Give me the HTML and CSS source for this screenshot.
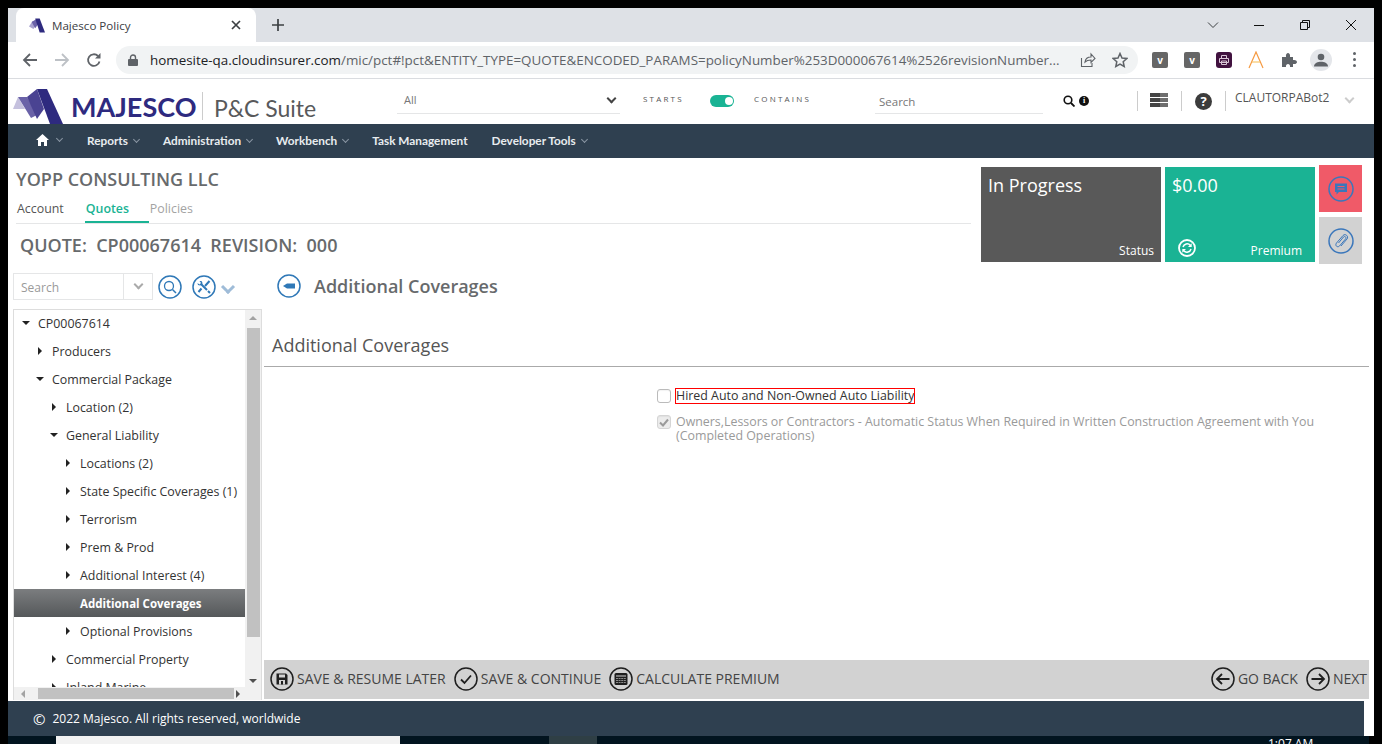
FILE: index.html
```html
<!DOCTYPE html>
<html lang="en">
<head>
    <meta charset="UTF-8">
    <title>Majesco Policy</title>
    <link rel="stylesheet" href="styles.css">
</head>
<body>
<div class="screen">

    <!-- browser chrome -->
    <div class="tabstrip">
        <div class="tab">
            <svg class="tab-logo" width="16" height="15" viewBox="0 0 18 16">
                <path d="M0 9 4 3 7 9 5 12Z" fill="#a9a3cf"/>
                <path d="M3 4 8 1 10 7 7 11Z" fill="#6a62a8"/>
                <path d="M7 0H12L18 16H12Z" fill="#2e2a7f"/>
            </svg>
            <span class="tab-title">Majesco Policy</span>
            <svg class="tab-close" width="10" height="10" viewBox="0 0 10 10"><path d="M1 1 9 9M9 1 1 9" stroke="#3c4043" stroke-width="1.7"/></svg>
        </div>
        <svg class="tab-new" width="14" height="14" viewBox="0 0 14 14"><path d="M7 1V13M1 7H13" stroke="#3c4043" stroke-width="1.7"/></svg>
        <div class="window-btns">
            <svg width="12" height="12" viewBox="0 0 12 12"><path d="M1 3.5 6 8.5 11 3.5" fill="none" stroke="#3c4043"/></svg>
            <svg width="12" height="12" viewBox="0 0 12 12"><path d="M1 6.5H11" stroke="#111"/></svg>
            <svg width="12" height="12" viewBox="0 0 12 12"><path d="M1.5 3.5H8.5V10.5H1.5ZM3.5 3.5V1.5H10.5V8.5H8.5" fill="none" stroke="#111"/></svg>
            <svg width="12" height="12" viewBox="0 0 12 12"><path d="M1 1 11 11M11 1 1 11" stroke="#111"/></svg>
        </div>
    </div>
    <div class="toolbar">
        <svg class="tb-nav" width="16" height="16" viewBox="0 0 16 16"><path d="M15 8H2M8 2 2 8 8 14" fill="none" stroke="#5f6368" stroke-width="1.8"/></svg>
        <svg class="tb-nav" width="16" height="16" viewBox="0 0 16 16"><path d="M1 8H14M8 2 14 8 8 14" fill="none" stroke="#bdc1c6" stroke-width="1.8"/></svg>
        <svg class="tb-nav" width="16" height="16" viewBox="0 0 16 16"><path d="M13.5 9.5A5.8 5.8 0 1 1 12 4" fill="none" stroke="#5f6368" stroke-width="1.8"/><path d="M14.5 1V6.5H9Z" fill="#5f6368"/></svg>
        <div class="omnibox">
            <svg width="10" height="12" viewBox="0 0 10 12"><path d="M2.5 5V3.5a2.5 2.5 0 0 1 5 0V5" fill="none" stroke="#5f6368" stroke-width="1.4"/><rect y="5" width="10" height="7" rx="1" fill="#5f6368"/></svg>
            <span class="url"><b>homesite-qa.cloudinsurer.com</b>/mic/pct#!pct&amp;ENTITY_TYPE=QUOTE&amp;ENCODED_PARAMS=policyNumber%253D000067614%2526revisionNumber...</span>
            <svg class="omni-share" width="16" height="16" viewBox="0 0 16 16"><path d="M1.5 6V14.5H12V11M5 10C5.500 6.500 8 5 11 5V2L15 6.500 11 10.500V8C8.500 8 6.500 8.500 5 10Z" fill="none" stroke="#5f6368" stroke-width="1.1"/></svg>
            <svg class="omni-star" width="16" height="16" viewBox="0 0 16 16"><path d="M8 1.500 10 6 14.800 6.500 11.200 9.700 12.200 14.500 8 12 3.800 14.500 4.800 9.700 1.200 6.500 6 6Z" fill="none" stroke="#5f6368" stroke-width="1.500"/></svg>
        </div>
        <div class="extensions">
            <span class="ext ext-v">v</span>
            <span class="ext ext-v">v</span>
            <span class="ext ext-print"><svg width="10" height="10" viewBox="0 0 10 10"><path d="M2.500 3.500V.5H7.500V3.500M.5 3.500H9.500V7.500H.5ZM2.500 6H7.500V9.500H2.500Z" fill="none" stroke="#d9c6d6"/></svg></span>
            <svg class="ext-a" width="16" height="18" viewBox="0 0 16 18"><path d="M1 17 8 1 15 17" fill="none" stroke="#f59a42" stroke-width="1.200"/><path d="M4 11H12" stroke="#f7c66b" stroke-width="1.200"/></svg>
            <svg class="ext-puzzle" width="16" height="16" viewBox="0 0 16 16"><path d="M1 5H5C4.500 2 6 1 7 1S9.500 2 9 5H12V8C15 7.500 16 9 16 10S15 12.500 12 12V15H9C9.500 13 8 12 7 12S4.500 13 5 15H1Z" fill="#5f6368"/></svg>
            <span class="profile"><svg width="14" height="14" viewBox="0 0 14 14"><circle cx="7" cy="4" r="3.300" fill="#5f6368"/><path d="M0 13.500C0 10 4 8.800 7 8.800S14 10 14 13.500Z" fill="#5f6368"/></svg></span>
            <span class="dots"><i></i><i></i><i></i></span>
        </div>
    </div>

    <!-- app header -->
    <div class="app-header">
        <svg class="logo" width="50" height="35" viewBox="0 0 50 35">
            <path d="M0 20 5 8 12 20Z" fill="#c5c1de"/>
            <path d="M5 8H14L24 26 18 29Z" fill="#6a62a8"/>
            <path d="M24 0 31 20 24 30 14 8Z" fill="#4a4392"/>
            <path d="M24 0H34L50 35H37Z" fill="#2e2a7f"/>
        </svg>
        <span class="brand">MAJESCO</span>
        <span class="suite">P&amp;C Suite</span>
        <div class="select-all"><span>All</span><i class="chev chev-dark"></i></div>
        <span class="switch-label starts">STARTS</span>
        <span class="toggle"></span>
        <span class="switch-label contains">CONTAINS</span>
        <div class="global-search">Search</div>
        <svg class="hd-search" width="12" height="12" viewBox="0 0 12 12"><circle cx="5" cy="5" r="3.800" fill="none" stroke="#111" stroke-width="1.600"/><path d="M8 8 11.500 11.500" stroke="#111" stroke-width="1.800"/></svg>
        <span class="hd-info">i</span>
        <span class="hd-rule rule-a"></span>
        <span class="stack"><i></i><i></i><i></i></span>
        <span class="hd-rule rule-b"></span>
        <span class="hd-help">?</span>
        <span class="hd-rule rule-c"></span>
        <span class="username">CLAUTORPABot2</span>
        <i class="chev chev-user"></i>
    </div>
    <nav class="main-nav">
        <svg class="home" width="13" height="12" viewBox="0 0 13 12"><path d="M6.500 0 13 6H11V12H8V8H5V12H2V6H0Z" fill="#fff"/></svg>
        <i class="chev chev-nav chev-home"></i>
        <a>Reports<i class="chev chev-nav"></i></a>
        <a>Administration<i class="chev chev-nav"></i></a>
        <a>Workbench<i class="chev chev-nav"></i></a>
        <a>Task Management</a>
        <a>Developer Tools<i class="chev chev-nav"></i></a>
    </nav>

    <!-- page -->
    <div class="page">
        <div class="summary">
            <div class="summary-left">
                <h1 class="account-name">YOPP CONSULTING LLC</h1>
                <div class="tabs">
                    <span class="tab-link">Account</span>
                    <span class="tab-link active">Quotes</span>
                    <span class="tab-link muted">Policies</span>
                </div>
                <div class="quote-line">QUOTE:&nbsp; CP00067614&nbsp; REVISION:&nbsp; 000</div>
            </div>
            <div class="tile tile-status">
                <div class="tile-value">In Progress</div>
                <div class="tile-foot"><span>Status</span></div>
            </div>
            <div class="tile tile-premium">
                <div class="tile-value">$0.00</div>
                <div class="tile-foot">
                    <svg width="18" height="18" viewBox="0 0 18 18"><circle cx="9" cy="9" r="8" fill="none" stroke="#fff" stroke-width="1.800"/><path d="M5 8A4.300 4.300 0 0 1 12.300 6.200M13 10A4.300 4.300 0 0 1 5.700 11.800" fill="none" stroke="#fff" stroke-width="1.500"/><path d="M13.700 4.300V8H10ZM4.300 13.700V10H8Z" fill="#fff"/></svg>
                    <span>Premium</span>
                </div>
            </div>
            <div class="side-btns">
                <div class="side-btn side-red">
                    <svg width="26" height="26" viewBox="0 0 26 26"><circle cx="13" cy="13" r="12" fill="none" stroke="#3b77bb" stroke-width="1.500"/><path d="M7 7.500H19V16H11L8.500 18.500V16H7Z" fill="#3b77bb"/><path d="M9.500 10.500H16.500M9.500 13H16.500" stroke="#f05a68"/></svg>
                </div>
                <div class="side-btn side-grey">
                    <svg width="26" height="26" viewBox="0 0 26 26"><circle cx="13" cy="13" r="12" fill="none" stroke="#3b77bb" stroke-width="1.500"/><path d="M10.500 15 15.500 9C17 7.500 18.800 9.500 17.500 11L11.500 18C9.500 20 6.500 17.500 8.500 15L15 7.500C17.500 5 21 8.500 19 11L13 18" fill="none" stroke="#3b77bb"/></svg>
                </div>
            </div>
        </div>

        <div class="work">
            <aside class="sidebar">
                <div class="tree-tools">
                    <div class="tree-search">
                        <span class="tree-search-text">Search</span>
                        <span class="tree-search-drop"><i class="chev chev-grey"></i></span>
                    </div>
                    <svg width="24" height="24" viewBox="0 0 24 24"><circle cx="12" cy="12" r="11" fill="none" stroke="#2f78b7" stroke-width="1.500"/><circle cx="11" cy="11" r="4.500" fill="none" stroke="#2f78b7" stroke-width="1.300"/><path d="M14.500 14.500 18 18" stroke="#2f78b7" stroke-width="1.500"/></svg>
                    <svg class="tool-gear" width="24" height="24" viewBox="0 0 24 24"><circle cx="12" cy="12" r="11" fill="none" stroke="#2f78b7" stroke-width="1.500"/><path d="M9.500 9.500 15 15M16 16 18 18" stroke="#2f78b7" stroke-width="2"/><path d="M5.500 8 7.500 9.500 9 8 7.500 6 9.500 6 10.500 8 10 10 8 10.500 6 10Z" fill="#2f78b7"/><path d="M17.500 6 13 11M9.500 13.500 6.500 17" stroke="#2f78b7" stroke-width="2"/></svg>
                    <i class="chev chev-blue"></i>
                </div>
                <div class="tree">
                    <div class="tree-body">
                        <ul class="tree-list">
                            <li class="lv0"><i class="tri tri-down"></i>CP00067614</li>
                            <li class="lv1"><i class="tri"></i>Producers</li>
                            <li class="lv1"><i class="tri tri-down"></i>Commercial Package</li>
                            <li class="lv2"><i class="tri"></i>Location (2)</li>
                            <li class="lv2"><i class="tri tri-down"></i>General Liability</li>
                            <li class="lv3"><i class="tri"></i>Locations (2)</li>
                            <li class="lv3"><i class="tri"></i>State Specific Coverages (1)</li>
                            <li class="lv3"><i class="tri"></i>Terrorism</li>
                            <li class="lv3"><i class="tri"></i>Prem &amp; Prod</li>
                            <li class="lv3"><i class="tri"></i>Additional Interest (4)</li>
                            <li class="lv3 selected"><i class="tri tri-none"></i>Additional Coverages</li>
                            <li class="lv3"><i class="tri"></i>Optional Provisions</li>
                            <li class="lv2"><i class="tri"></i>Commercial Property</li>
                            <li class="lv2"><i class="tri"></i>Inland Marine</li>
                        </ul>
                        <div class="vscroll">
                            <i class="sc-arrow sc-up"></i>
                            <span class="vthumb"></span>
                            <i class="sc-arrow sc-down"></i>
                        </div>
                    </div>
                    <div class="hscroll">
                        <i class="sc-arrow sc-left"></i>
                        <span class="hthumb"></span>
                        <i class="sc-arrow sc-right"></i>
                    </div>
                </div>
            </aside>

            <section class="content">
                <div class="content-title">
                    <svg width="24" height="24" viewBox="0 0 24 24"><circle cx="12" cy="12" r="11" fill="none" stroke="#2f78b7" stroke-width="1.500"/><path d="M6 12 10 9.500H18V14.500H10Z" fill="#2f78b7"/></svg>
                    <span>Additional Coverages</span>
                </div>
                <h2 class="section-title">Additional Coverages</h2>
                <div class="options">
                    <label class="option">
                        <span class="check"></span>
                        <span class="hired">Hired Auto and Non-Owned Auto Liability</span>
                    </label>
                    <label class="option option-off">
                        <span class="check check-on"><svg width="10" height="9" viewBox="0 0 10 9"><path d="M1 4.500 4 7.500 9 1.500" fill="none" stroke="#9a9a9a" stroke-width="2"/></svg></span>
                        <span>Owners,Lessors or Contractors - Automatic Status When Required in Written Construction Agreement with You (Completed Operations)</span>
                    </label>
                </div>
                <div class="action-bar">
                    <a class="action">
                        <svg width="24" height="24" viewBox="0 0 24 24"><circle cx="12" cy="12" r="11" fill="none" stroke="#1f1f1f" stroke-width="1.500"/><path d="M6.500 6.500H16L17.500 8V17.500H6.500Z" fill="#1f1f1f"/><path d="M9 7.500H15V10.500H9Z" fill="#d2d2d2"/><path d="M9 13H15V17.500H9Z" fill="#d2d2d2"/><path d="M11 14H13V17.500H11Z" fill="#1f1f1f"/></svg>
                        SAVE &amp; RESUME LATER
                    </a>
                    <a class="action">
                        <svg width="24" height="24" viewBox="0 0 24 24"><circle cx="12" cy="12" r="11" fill="none" stroke="#1f1f1f" stroke-width="1.500"/><path d="M7 12.500 10.500 16 17 8.500" fill="none" stroke="#1f1f1f" stroke-width="1.800"/></svg>
                        SAVE &amp; CONTINUE
                    </a>
                    <a class="action">
                        <svg width="24" height="24" viewBox="0 0 24 24"><circle cx="12" cy="12" r="11" fill="none" stroke="#1f1f1f" stroke-width="1.500"/><rect x="5.500" y="6" width="13" height="12" rx="1.500" fill="#1f1f1f"/><path d="M7 9H17" stroke="#d2d2d2"/><path d="M7 11.500H17M7 13.500H17M7 15.500H17" stroke="#8a8a8a" stroke-dasharray="2 .6"/></svg>
                        CALCULATE PREMIUM
                    </a>
                    <a class="action action-back">
                        <svg width="24" height="24" viewBox="0 0 24 24"><circle cx="12" cy="12" r="11" fill="none" stroke="#1f1f1f" stroke-width="1.500"/><path d="M18.500 12H6.500M11 7 6 12 11 17" fill="none" stroke="#1f1f1f" stroke-width="1.800"/></svg>
                        GO BACK
                    </a>
                    <a class="action">
                        <svg width="24" height="24" viewBox="0 0 24 24"><circle cx="12" cy="12" r="11" fill="none" stroke="#1f1f1f" stroke-width="1.500"/><path d="M5.500 12H17.500M13 7 18 12 13 17" fill="none" stroke="#1f1f1f" stroke-width="1.800"/></svg>
                        NEXT
                    </a>
                </div>
            </section>
        </div>
    </div>

    <footer class="app-footer"><span class="copy">&copy;</span>2022 Majesco. All rights reserved, worldwide</footer>
    <div class="taskbar">
        <span class="task-input"></span>
        <span class="task-app"></span>
        <span class="task-clock">1:07 AM</span>
    </div>
</div>
</body>
</html>
```

FILE: styles.css
```css
* {
    box-sizing: border-box;
}

html, body {
    margin: 0;
    height: 744px;
    overflow: hidden;
    background: #000;
}

body {
    font-family: "Open Sans", sans-serif;
    font-size: 12px;
    color: #676a6c;
}

i {
    font-style: normal;
}

.screen {
    width: 1366px;
    height: 728px;
    margin: 8px 0 0 8px;
    background: #fff;
    display: flex;
    flex-direction: column;
    position: relative;
}

/* Browser chrome */
.tabstrip {
    height: 34px;
    background: #dee1e6;
    display: flex;
    align-items: center;
    flex: none;
}

.tab {
    width: 240px;
    height: 34px;
    margin-left: 8px;
    padding: 0 0 0 13px;
    background: #fff;
    border-radius: 8px 8px 0 0;
    display: flex;
    align-items: center;
}

.tab-title {
    margin-left: 7px;
    width: 91px;
    font-size: 11.600px;
    color: #3c4043;
}

.tab-close {
    margin-left: 88px;
}

.tab-new {
    margin-left: 15px;
}

.window-btns {
    margin-left: auto;
    margin-right: 17px;
    display: flex;
    gap: 34px;
}

.toolbar {
    height: 37px;
    flex: none;
    background: #fff;
    border-bottom: 1px solid #dadce0;
    display: flex;
    align-items: center;
    padding-left: 14px;
    padding-bottom: 1px;
}

.tb-nav {
    margin-right: 16px;
}

.omnibox {
    width: 1022px;
    height: 28px;
    margin-left: -2px;
    padding-left: 12px;
    background: #f1f3f4;
    border-radius: 14px;
    display: flex;
    align-items: center;
    flex: none;
}

.url {
    margin-left: 12px;
    width: 915px;
    font-size: 13.400px;
    color: #5f6368;
    white-space: nowrap;
    overflow: hidden;
}

.url b {
    font-weight: 400;
    color: #202124;
}

.omni-share {
    margin-left: 15px;
}

.omni-star {
    margin-left: 16px;
}

.extensions {
    display: flex;
    align-items: center;
    margin-left: 14px;
}

.ext {
    width: 16px;
    height: 16px;
    margin-right: 16px;
    border-radius: 2px;
    display: flex;
    align-items: center;
    justify-content: center;
}

.ext-v {
    background: #666;
    color: #fff;
    font-size: 10px;
    font-weight: 700;
}

.ext-print {
    background: #41123f;
    border-radius: 3px;
}

.ext-a {
    margin-right: 17px;
}

.ext-puzzle {
    margin-right: 13px;
}

.profile {
    width: 22px;
    height: 22px;
    border-radius: 50%;
    background: #e4e6ea;
    display: flex;
    align-items: center;
    justify-content: center;
}

.dots {
    margin-left: 21px;
    display: flex;
    flex-direction: column;
    gap: 3px;
}

.dots i {
    width: 3px;
    height: 3px;
    border-radius: 50%;
    background: #5f6368;
}

/* App header */
.app-header {
    height: 45px;
    flex: none;
    position: relative;
    display: flex;
    align-items: flex-start;
    overflow: hidden;
}

.logo {
    margin: 10px 0 0 5px;
    flex: none;
}

.brand {
    margin: 13px 0 0 8px;
    width: 132px;
    height: 28px;
    font-family: Lato, sans-serif;
    font-size: 27px;
    font-weight: 700;
    line-height: 30px;
    color: #2e2a7f;
    border-right: 1px solid #ccc;
    flex: none;
}

.suite {
    margin: 14px 0 0 11px;
    width: 110px;
    font-family: Lato, sans-serif;
    font-size: 23px;
    line-height: 30px;
    color: #58595b;
    flex: none;
}

.select-all {
    margin: 11px 0 0 73px;
    width: 223px;
    height: 24px;
    padding: 0 5px 0 7px;
    border-bottom: 1px solid #e5e6e7;
    display: flex;
    justify-content: space-between;
    flex: none;
    font-size: 11px;
    line-height: 20px;
    color: #777;
}

.switch-label {
    margin-top: 14px;
    font-size: 8px;
    line-height: 12px;
    letter-spacing: 2.200px;
    color: #555;
    flex: none;
}

.starts {
    margin-left: 23px;
    width: 67px;
}

.toggle {
    width: 24px;
    height: 12px;
    margin-top: 16px;
    border-radius: 6px;
    background: #1ab394;
    position: relative;
    flex: none;
}

.toggle::after {
    content: "";
    position: absolute;
    right: 1px;
    top: 2px;
    width: 8px;
    height: 8px;
    border-radius: 50%;
    background: #fff;
}

.contains {
    margin-left: 20px;
    width: 121px;
}

.global-search {
    width: 168px;
    height: 24px;
    margin-top: 11px;
    padding: 3px 4px;
    border-bottom: 1px solid #e5e6e7;
    flex: none;
    font-size: 11.500px;
    line-height: 17px;
    color: #777;
}

.hd-search {
    margin: 16px 0 0 20px;
    flex: none;
}

.hd-info {
    margin: 17px 0 0 4px;
    width: 10px;
    height: 10px;
    border-radius: 50%;
    background: #111;
    color: #fff;
    font: 700 8px/10px "Liberation Serif", serif;
    text-align: center;
    flex: none;
}

.hd-rule {
    width: 1px;
    height: 20px;
    margin-top: 12px;
    background: #ccc;
    flex: none;
}

.rule-a {
    margin-left: 48px;
}

.stack {
    width: 18px;
    margin: 14px 0 0 12px;
    display: flex;
    flex-direction: column;
    gap: 1px;
    flex: none;
}

.stack i {
    height: 4px;
    background: #444;
    border-right: 8px solid #6e6e6e;
}

.rule-b {
    margin-left: 13px;
}

.hd-help {
    width: 17px;
    height: 17px;
    margin: 14px 0 0 13px;
    border-radius: 50%;
    background: #3c3c3c;
    color: #fff;
    font: 700 13px/17px "Open Sans", sans-serif;
    text-align: center;
    flex: none;
}

.rule-c {
    margin-left: 13px;
}

.username {
    margin: 10px 0 0 9px;
    width: 106px;
    font-size: 12px;
    line-height: 18px;
    color: #555;
    flex: none;
}

/* Chevrons */
.chev {
    display: inline-block;
    width: 7px;
    height: 7px;
    border-right: 2px solid #999;
    border-bottom: 2px solid #999;
    transform: rotate(45deg);
    flex: none;
}

.chev-dark {
    margin-top: 5px;
    border-color: #444;
}

.chev-user {
    margin: 16px 0 0 5px;
    border-color: #ccc;
}

.chev-nav {
    width: 5px;
    height: 5px;
    margin: 0 0 3px 6px;
    border-width: 0 1.500px 1.500px 0;
    border-color: #8a96a3;
}

.chev-home {
    margin-left: 8px;
    margin-right: 25px;
}

.chev-grey {
    width: 7px;
    height: 7px;
    border-color: #aaa;
}

.chev-blue {
    width: 10px;
    height: 10px;
    margin: 0 0 0 7px;
    border-width: 0 3px 3px 0;
    border-color: #9fbcd8;
}

/* Nav bar */
.main-nav {
    height: 34px;
    flex: none;
    background: #2f4050;
    display: flex;
    align-items: center;
    padding: 0 0 2px 28px;
    font-family: Lato, sans-serif;
    font-size: 11.800px;
    font-weight: 700;
    color: #e8ecef;
}

.main-nav a {
    margin-right: 24px;
    white-space: nowrap;
}

/* Page */
.page {
    flex: 1;
    min-height: 0;
    display: flex;
    flex-direction: column;
    overflow: hidden;
}

.summary {
    height: 107px;
    flex: none;
    display: flex;
    align-items: flex-start;
}

.summary-left {
    width: 955px;
    margin-left: 8px;
    margin-right: 10px;
    padding-top: 9px;
    flex: none;
}

.account-name {
    margin: 0;
    font-size: 18px;
    font-weight: 600;
    line-height: 25px;
    color: #676a6c;
}

.tabs {
    display: flex;
    height: 32px;
    padding-top: 6px;
    border-bottom: 1px solid #e5e6e7;
}

.tab-link {
    height: 25px;
    padding: 2px 1px 0;
    line-height: 17px;
    color: #555;
    margin-right: 20px;
    font-size: 12.400px;
}

.tab-link.active {
    width: 64px;
    margin-right: 0;
    padding-left: 1px;
    border-bottom: 2px solid #1ab394;
    color: #1ab394;
    font-weight: 600;
}

.tab-link.muted {
    color: #a3a3a3;
}

.quote-line {
    margin: 9px 0 0 4px;
    font-size: 18px;
    font-weight: 600;
    line-height: 25px;
}

.tile {
    height: 95px;
    margin-top: 9px;
    padding: 5px 7px 4px;
    color: #fff;
    display: flex;
    flex-direction: column;
    justify-content: space-between;
    flex: none;
}

.tile-status {
    width: 180px;
    background: #595959;
}

.tile-premium {
    width: 150px;
    margin-left: 4px;
    background: #1ab394;
}

.tile-value {
    font-size: 18px;
    line-height: 26px;
}

.tile-foot {
    display: flex;
    justify-content: space-between;
    align-items: flex-end;
    margin: 0 6px 0 6px;
    font-size: 12px;
    line-height: 14px;
}

.tile-foot svg {
    margin-bottom: 1px;
}

.tile-status .tile-foot {
    justify-content: flex-end;
    margin-right: 0;
}

.side-btns {
    margin: 7px 0 0 4px;
    width: 43px;
    display: flex;
    flex-direction: column;
    gap: 5px;
    flex: none;
}

.side-btn {
    height: 47px;
    display: flex;
    align-items: center;
    justify-content: center;
}

.side-red {
    background: #f05a68;
}

.side-grey {
    background: #d2d2d2;
}

/* Work area */
.work {
    flex: 1;
    min-height: 0;
    display: flex;
}

.sidebar {
    width: 256px;
    flex: none;
    padding-left: 5px;
}

.tree-tools {
    height: 44px;
    display: flex;
    align-items: flex-start;
    padding-top: 8px;
}

.tree-tools svg {
    margin-left: 5px;
    flex: none;
    margin-top: 2px;
}

.tree-tools .tool-gear {
    margin-left: 10px;
}

.tree-tools .chev-blue {
    margin-top: 9px;
}

.tree-search {
    width: 140px;
    height: 27px;
    border: 1px solid #e5e6e7;
    display: flex;
    flex: none;
}

.tree-search-text {
    flex: 1;
    padding-left: 7px;
    line-height: 27px;
    color: #9a9a9a;
}

.tree-search-drop {
    width: 29px;
    border-left: 1px solid #e5e6e7;
    display: flex;
    justify-content: center;
    padding-top: 7px;
}

.tree {
    width: 249px;
    height: 391px;
    border: 1px solid #ddd;
    border-bottom: 0;
    display: flex;
    flex-direction: column;
}

.tree-body {
    flex: 1;
    min-height: 0;
    display: flex;
}

.tree-list {
    flex: 1;
    margin: -1px 0 0;
    padding: 0;
    list-style: none;
    overflow: hidden;
    font-size: 12.400px;
    color: #333;
}

.tree-list li {
    height: 28px;
    display: flex;
    align-items: center;
    white-space: nowrap;
}

.lv0 { padding-left: 8px; }
.lv1 { padding-left: 22px; }
.lv2 { padding-left: 36px; }
.lv3 { padding-left: 50px; }

.tree-list .selected {
    background: linear-gradient(#7b7d7f, #55585a);
    color: #fff;
    font-weight: 700;
    font-size: 11.500px;
}

.tri {
    width: 8px;
    height: 8px;
    margin-right: 8px;
    flex: none;
    position: relative;
}

.tri::before {
    content: "";
    position: absolute;
    left: 2px;
    top: 0;
    border-style: solid;
    border-width: 4px 0 4px 4px;
    border-color: transparent transparent transparent #222;
}

.tri-down::before {
    left: 0;
    top: 2px;
    border-width: 4px 4px 0;
    border-color: #222 transparent transparent;
}

.tri-none::before {
    display: none;
}

.vscroll {
    width: 16px;
    flex: none;
    background: #f1f1f1;
    display: flex;
    flex-direction: column;
    align-items: center;
    justify-content: space-between;
    padding: 6px 0 4px;
}

.vthumb {
    width: 13px;
    height: 309px;
    margin-top: 2px;
    margin-bottom: 37px;
    background: #c1c1c1;
}

.hscroll {
    height: 13px;
    flex: none;
    background: #f1f1f1;
    display: flex;
    align-items: center;
    padding: 0 21px 0 7px;
}

.hthumb {
    width: 196px;
    height: 11px;
    margin: 0 auto 0 13px;
    background: #c1c1c1;
}

.sc-arrow {
    width: 0;
    height: 0;
    border-style: solid;
    flex: none;
}

.sc-up { border-width: 0 4px 4px; border-color: transparent transparent #a3a3a3; }
.sc-down { border-width: 4px 4px 0; border-color: #505050 transparent transparent; }
.sc-left { border-width: 4px 4px 4px 0; border-color: transparent #a3a3a3 transparent transparent; }
.sc-right { border-width: 4px 0 4px 4px; border-color: transparent transparent transparent #505050; }

/* Main content */
.content {
    width: 1105px;
    flex: none;
    display: flex;
    flex-direction: column;
}

.content-title {
    height: 41px;
    padding-left: 13px;
    display: flex;
    align-items: center;
    font-size: 18px;
    font-weight: 600;
    flex: none;
}

.content-title span {
    margin-left: 13px;
}

.section-title {
    margin: 17px 0 0;
    height: 44px;
    padding: 10px 0 0 8px;
    font-size: 18px;
    font-weight: 400;
    line-height: 25px;
    color: #555;
    border-bottom: 1px solid #aaa;
    flex: none;
}

.options {
    flex: 1;
    padding: 22px 50px 0 393px;
}

.option {
    display: flex;
    align-items: flex-start;
    font-size: 12.400px;
    line-height: 14px;
    color: #333;
    margin-bottom: 12px;
}

.option-off {
    color: #9a9a9a;
}

.check {
    width: 14px;
    height: 14px;
    margin: 0 5px 0 0;
    border: 1px solid #bbb;
    border-radius: 3px;
    background: #fff;
    display: flex;
    align-items: center;
    justify-content: center;
    flex: none;
    box-shadow: inset 0 1px 1px rgba(0, 0, 0, 0.05);
}

.check-on {
    background: #ececec;
    border-color: #d5d5d5;
}

.hired {
    height: 14px;
    outline: 1px solid #f00;
}

.action-bar {
    height: 39px;
    flex: none;
    margin-bottom: 2px;
    padding: 0 0 2px 6px;
    background: #d2d2d2;
    display: flex;
    align-items: center;
    font-size: 14px;
    color: #444;
}

.action {
    display: flex;
    align-items: center;
    gap: 3px;
    margin-right: 8px;
    white-space: nowrap;
}

.action-back {
    margin-left: auto;
}

.action:last-child {
    margin-right: 2px;
}

/* Footer */
.app-footer {
    height: 35px;
    width: 1356px;
    flex: none;
    background: #2f4050;
    color: #fff;
    display: flex;
    align-items: center;
    padding-left: 25px;
    font-size: 12px;
}

.copy {
    margin-right: 7px;
    font-size: 15px;
}

.taskbar {
    position: absolute;
    left: 0;
    top: 728px;
    width: 1361px;
    height: 8px;
    background: #02141f;
    overflow: hidden;
}

.task-input {
    position: absolute;
    left: 48px;
    top: 0;
    width: 344px;
    height: 8px;
    background: #f2f2f2;
}

.task-app {
    position: absolute;
    left: 541px;
    top: 0;
    width: 48px;
    height: 8px;
    background: #2f3f45;
}

.task-clock {
    position: absolute;
    left: 1260px;
    top: 0;
    color: #fff;
    font-size: 12px;
    line-height: 16px;
}
```
